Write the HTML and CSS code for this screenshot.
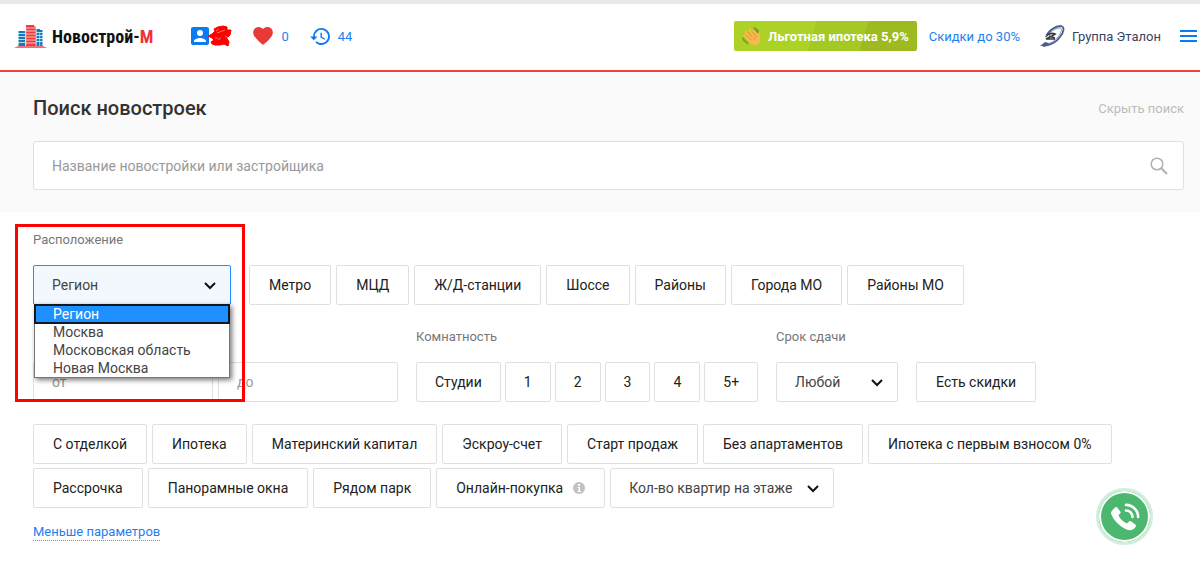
FILE: index.html
```html
<!DOCTYPE html>
<html lang="ru">
<head>
<meta charset="utf-8">
<meta name="viewport" content="width=device-width, initial-scale=1">
<title>Новострой-М</title>
<link rel="stylesheet" href="styles.css">
</head>
<body>
<header class="header">
  <a class="logo" href="#">
    <svg class="logo-mark" viewBox="0 0 33 24" aria-hidden="true">
      <path fill="#f23a3e" d="M12 1h8v21h-8z"/>
      <path fill="#147bb8" d="M4.500 7h7v15h-7zM21 5h7.500v17H21z"/>
      <path fill="#f23a3e" d="M20 2l2 1v19h-2z"/>
      <path stroke="#fff" stroke-width=".7" d="M12 4h10M12 7h10M12 10h10M12 13h10M12 16h10M12 19h10M4 9.500h7M4 12.500h7M4 15.500h7M4 18.500h7M22 8.500h7M22 11.500h7M22 14.500h7M22 17.500h7M11.700 3v19M22.200 3v19"/>
      <path fill="#fff" d="M26 4h3v2h-3zM25.500 9h.6v13h-.6z"/>
      <path fill="#e9747d" d="M0 24l4-2h25l4 2z"/>
    </svg>
    <span class="logo-text">Новострой-<span class="logo-accent">М</span></span>
  </a>
  <nav class="user-nav" aria-label="Профиль">
    <a class="user-link profile" href="#" aria-label="Профиль">
      <svg width="18" height="18" viewBox="3 3 18 18" aria-hidden="true"><path fill="#0b7cf0" d="M3 5v14c0 1.100.900 2 2 2h14c1.100 0 2-.900 2-2V5c0-1.100-.900-2-2-2H5c-1.100 0-2 .900-2 2zm12 4a3 3 0 1 1-6 0 3 3 0 0 1 6 0zm-9 8c0-2 4-3.100 6-3.100s6 1.100 6 3.100v1H6z"/></svg>
      <svg class="scribble" width="25" height="22" viewBox="0 0 25 22" aria-hidden="true"><path fill="#f00" stroke="#f00" stroke-linejoin="round" d="M1 11l4-2 3-3-1-2 4-2 5-1 4 1 0 3 4 0-1 5-2 2-2 0 2 3 1 2-1 4-4-2-4 1-5 0-3-1-1-2 3-2-2-2z"/><path stroke="#ff9c9c" stroke-width=".7" fill="none" d="M9 6l3-2M10 8l8-3M11 15l3-2M8 13l3 0M18 12l2-1"/></svg>
    </a>
    <a class="user-link" href="#" aria-label="Избранное: 0">
      <svg width="20" height="18" viewBox="2 3 20 18.350" aria-hidden="true"><path fill="#e93a37" d="M12 21.350l-1.450-1.320C5.400 15.360 2 12.280 2 8.500 2 5.420 4.420 3 7.500 3c1.740 0 3.410.810 4.500 2.090C13.090 3.810 14.760 3 16.500 3 19.580 3 22 5.420 22 8.500c0 3.780-3.400 6.860-8.550 11.540z"/></svg>
      <span>0</span>
    </a>
    <a class="user-link" href="#" aria-label="История: 44">
      <svg width="20" height="17" viewBox="1 3 21 18" aria-hidden="true"><path fill="#0b7cf0" d="M13 3a9 9 0 0 0-9 9H1l3.890 3.890.070.140L9 12H6a7 7 0 1 1 2.060 4.940l-1.420 1.420A9 9 0 1 0 13 3zm-1 5v5l4.280 2.540.720-1.210-3.500-2.080V8z"/></svg>
      <span>44</span>
    </a>
  </nav>
  <div class="header-side">
    <a class="promo" href="#">
      <svg width="19" height="19" viewBox="0 0 20 20" aria-hidden="true">
        <path fill="none" stroke="#7c9c36" stroke-width="2" stroke-linecap="round" d="M13 1l4 3M14 3l4 4M1 12l2 3M2 14l4 3"/>
        <path fill="none" stroke="#f8b94c" stroke-width="2.800" stroke-linecap="round" d="M4 5l7 8M8 3l6 8M3 9l6 6M12 4l4 6"/>
        <path fill="#f8b94c" d="M7 9l6-4 3 4c0-2 1-4 2.500-3.500 1 .500 0 2 .500 5s0 6-3 8-7 0-9-3z"/>
        <path fill="none" stroke="#d88b31" stroke-width=".8" d="M6 5l5 6M10 4l4 5M5 9l5 5M13 14c0-3 1-4 3-4"/>
      </svg>
      <span>Льготная ипотека 5,9%</span>
    </a>
    <a class="discount" href="#">Скидки до 30%</a>
    <a class="partner" href="#">
      <svg width="25" height="22" viewBox="0 0 25 22" aria-hidden="true">
        <path fill="none" stroke="#4a5f90" stroke-width="1.800" d="M6 12C8 6 15 1 21 1c4 1 3 6-1 11-4 6-10 8-17 9"/>
        <path fill="none" stroke="#8492b4" stroke-width="1" d="M9 9c3-4 8-6 11-6 3 1 1 5-2 9-3 4-7 6-11 7"/>
        <path fill="#4a5f90" d="M0 21l5-4 4 1-2 3z"/>
        <path fill="none" stroke="#3b3c42" stroke-width="1.700" d="M7 10c3-2 6-2 8-1l-3 2-6 3h9M9 11l6 2"/>
      </svg>
      <span>Группа Эталон</span>
    </a>
    <button class="menu-button" type="button" aria-label="Меню">
      <svg width="17" height="12" viewBox="0 0 17 12" aria-hidden="true"><path stroke="#0b7cf0" stroke-width="2" d="M0 1h17M0 6h17M0 11h17"/></svg>
    </button>
  </div>
</header>

<main>
  <section class="search">
    <div class="search-head">
      <h1 class="title">Поиск новостроек</h1>
      <button class="hide-search" type="button">Скрыть поиск</button>
    </div>
    <div class="search-box">
      <input class="search-input" type="search" aria-label="Поиск новостроек" placeholder="Название новостройки или застройщика">
      <button class="search-button" type="button" aria-label="Найти">
        <svg width="18" height="18" viewBox="0 0 18 18" aria-hidden="true"><g fill="none" stroke="#b0b0b0" stroke-width="1.500"><circle cx="7" cy="7" r="5.800"/><path stroke-width="2" d="M11 11l6 6"/></g></svg>
      </button>
    </div>
  </section>

  <form class="filters">
    <div class="row location">
      <div class="group">
        <label class="label" for="region">Расположение</label>
        <div class="select region">
          <select id="region">
            <option>Регион</option>
            <option>Москва</option>
            <option>Московская область</option>
            <option>Новая Москва</option>
          </select>
          <svg class="chevron" width="12" height="8" viewBox="0 0 12 8" aria-hidden="true"><path fill="none" stroke="#111" stroke-width="2" d="M1 1l5 5 5-5"/></svg>
          <ul class="options" role="listbox" aria-label="Расположение">
            <li class="option selected" role="option" aria-selected="true">Регион</li>
            <li class="option" role="option" aria-selected="false">Москва</li>
            <li class="option" role="option" aria-selected="false">Московская область</li>
            <li class="option" role="option" aria-selected="false">Новая Москва</li>
          </ul>
        </div>
      </div>
      <div class="buttons">
        <button class="btn" type="button">Метро</button>
        <button class="btn" type="button">МЦД</button>
        <button class="btn" type="button">Ж/Д-станции</button>
        <button class="btn" type="button">Шоссе</button>
        <button class="btn" type="button">Районы</button>
        <button class="btn" type="button">Города МО</button>
        <button class="btn" type="button">Районы МО</button>
      </div>
      <div class="highlight"></div>
    </div>

    <div class="row parameters">
      <div class="buttons price">
        <input class="field" type="text" aria-label="Цена от" placeholder="от">
        <input class="field" type="text" aria-label="Цена до" placeholder="до">
      </div>
      <div class="group" role="group" aria-labelledby="rooms-label">
        <span class="label" id="rooms-label">Комнатность</span>
        <div class="buttons rooms">
          <button class="btn" type="button">Студии</button>
          <button class="btn" type="button">1</button>
          <button class="btn" type="button">2</button>
          <button class="btn" type="button">3</button>
          <button class="btn" type="button">4</button>
          <button class="btn" type="button">5+</button>
        </div>
      </div>
      <div class="group">
        <label class="label" for="deadline">Срок сдачи</label>
        <div class="select deadline">
          <select id="deadline"><option>Любой</option></select>
          <svg class="chevron" width="12" height="8" viewBox="0 0 12 8" aria-hidden="true"><path fill="none" stroke="#111" stroke-width="2" d="M1 1l5 5 5-5"/></svg>
        </div>
      </div>
      <button class="btn" type="button">Есть скидки</button>
    </div>

    <div class="buttons extra">
      <button class="btn" type="button">С отделкой</button>
      <button class="btn" type="button">Ипотека</button>
      <button class="btn" type="button">Материнский капитал</button>
      <button class="btn" type="button">Эскроу-счет</button>
      <button class="btn" type="button">Старт продаж</button>
      <button class="btn" type="button">Без апартаментов</button>
      <button class="btn" type="button">Ипотека с первым взносом 0%</button>
      <button class="btn" type="button">Рассрочка</button>
      <button class="btn" type="button">Панорамные окна</button>
      <button class="btn" type="button">Рядом парк</button>
      <button class="btn with-info" type="button">Онлайн-покупка
        <svg width="12" height="12" viewBox="0 0 12 12" aria-hidden="true"><circle cx="6" cy="6" r="6" fill="#c1c1c1"/><path fill="#fff" d="M5 2h2v2H5zM4.500 5H7v4h1v1H4.500V9h1V6h-1z"/></svg>
      </button>
      <div class="select flats">
        <select aria-label="Количество квартир на этаже"><option>Кол-во квартир на этаже</option></select>
        <svg class="chevron" width="12" height="8" viewBox="0 0 12 8" aria-hidden="true"><path fill="none" stroke="#111" stroke-width="2" d="M1 1l5 5 5-5"/></svg>
      </div>
    </div>
    <a class="less" href="#">Меньше параметров</a>
  </form>
</main>

<button class="call" type="button" aria-label="Позвонить">
  <svg width="30" height="30" viewBox="0 0 32 32" aria-hidden="true">
    <path fill="#fff" d="M5 6c1-1 2-1 3 0l3 4c1 1 0 2-1 3l-1 1c2 4 5 7 9 9l2-2c1-1 2-1 3 0l4 3c1 1 1 2 0 3-3 4-7 4-12 1C8 24 3 18 1 12c0-2 2-4 4-6z"/>
    <path fill="none" stroke="#fff" stroke-width="2.800" stroke-linecap="round" d="M17 9c4 0 7 3 7 7M17 3c7 0 13 6 13 13"/>
  </svg>
</button>
</body>
</html>
```

FILE: styles.css
```css
* {
  box-sizing: border-box;
}

body {
  margin: 0;
  background: #fff;
  color: #212121;
  font-family: Roboto, "Liberation Sans", sans-serif;
  font-size: 14px;
}

a {
  color: #1f7fee;
  text-decoration: none;
}

button,
input,
select {
  font: inherit;
  color: inherit;
}

button {
  padding: 0;
  border: 0;
  background: none;
}

svg {
  flex-shrink: 0;
}

.header {
  display: flex;
  align-items: center;
  height: 72px;
  padding: 0 3px 2px 14px;
  border-top: 4px solid #e9e9e9;
  border-bottom: 2px solid #ef4140;
  font-size: 13px;
}

.logo {
  display: flex;
  align-items: center;
  gap: 5px;
  color: #111;
}

.logo-mark {
  width: 33px;
  height: 24px;
}

.logo-text {
  font: bold 18px "Roboto Condensed", "Liberation Sans Narrow", Roboto, sans-serif;
}

.logo-accent {
  color: #ee3338;
}

.user-nav {
  display: flex;
  align-items: center;
  gap: 21px;
  margin-left: 38px;
}

.user-link {
  display: flex;
  align-items: center;
  gap: 8px;
}

.profile {
  gap: 0;
}

.scribble {
  margin-left: -2px;
}

.header-side {
  display: flex;
  align-items: center;
  margin-left: auto;
}

.promo {
  display: flex;
  align-items: center;
  gap: 7px;
  height: 30px;
  padding: 0 8px;
  border-radius: 2px;
  background: linear-gradient(107deg, #add226 43%, #a4c925 43% 70%, #9dbb20 70%);
  color: #fff;
  font-weight: bold;
}

.discount {
  margin-left: 12px;
}

.partner {
  display: flex;
  align-items: center;
  gap: 7px;
  margin-left: 20px;
  color: #39435f;
}

.menu-button {
  display: flex;
  margin-left: 19px;
}

.search {
  padding: 24px 16px 22px 33px;
  background: #fafafa;
}

.search-head {
  display: flex;
  align-items: center;
  justify-content: space-between;
  margin-bottom: 21px;
}

.title {
  margin: 0;
  color: #333;
  font-size: 20px;
  font-weight: 500;
  line-height: 24px;
}

.hide-search {
  color: #bcbcbc;
  font-size: 13px;
}

.search-box {
  display: flex;
  align-items: center;
  height: 49px;
  padding: 0 15px 0 18px;
  border: 1px solid #e0e0e0;
  border-radius: 3px;
  background: #fff;
}

.search-input {
  flex: 1;
  min-width: 0;
  padding: 0;
  border: 0;
  outline: 0;
  background: none;
}

.search-input::placeholder,
.field::placeholder {
  color: #999;
  opacity: 1;
}

.search-button {
  display: flex;
}

.filters {
  padding: 20px 33px;
}

.row {
  display: flex;
  flex-wrap: wrap;
  align-items: flex-end;
  gap: 18px;
}

.location {
  position: relative;
}

.parameters {
  margin-top: 24px;
}

.group {
  display: flex;
  flex-direction: column;
  gap: 17px;
}

.label {
  color: #777;
  font-size: 13px;
  line-height: 16px;
}

.buttons {
  display: flex;
  flex-wrap: wrap;
  gap: 5px;
}

.btn,
.field,
.select select {
  height: 40px;
  padding: 0 18px;
  border: 1px solid #e0e0e0;
  border-radius: 2px;
  background: #fff;
}

.btn {
  padding: 0 19px;
}

.rooms {
  gap: 4px;
}

.rooms .btn {
  padding: 0 18px;
}

.with-info {
  display: flex;
  align-items: center;
  gap: 10px;
}

.select {
  position: relative;
}

.select select {
  width: 100%;
  appearance: none;
  color: #444;
}

.chevron {
  position: absolute;
  top: 17px;
  right: 15px;
  pointer-events: none;
}

.region {
  width: 198px;
}

.region select {
  border-color: #1f8fff;
  background: #f3f8ff;
}

.options {
  position: absolute;
  z-index: 1;
  top: 39px;
  left: 1px;
  right: 1px;
  margin: 0;
  padding: 0;
  border: 1px solid #777;
  background: #fff;
  box-shadow: 2px 2px 5px #0008;
  color: #444;
  list-style: none;
}

.option {
  padding: 0 18px;
  line-height: 18px;
}

.selected {
  outline: 2px solid #101820;
  outline-offset: -1px;
  background: #1e90ff;
  color: #fff;
}

.highlight {
  position: absolute;
  z-index: 2;
  top: -8px;
  left: -18px;
  width: 230px;
  height: 178px;
  border: 3px solid #f00;
  pointer-events: none;
}

.field {
  width: 180px;
}

.deadline {
  width: 122px;
}

.flats {
  width: 224px;
}

.extra {
  row-gap: 4px;
  margin-top: 22px;
}

.less {
  display: inline-block;
  margin-top: 16px;
  border-bottom: 1px dotted #ed6565;
  font-size: 13px;
  line-height: 16px;
}

.call {
  position: fixed;
  right: 47px;
  bottom: 16px;
  display: grid;
  place-items: center;
  width: 57px;
  height: 57px;
  border: 3px solid #d0eedb;
  border-radius: 50%;
  background: #4cb86f;
  box-shadow: inset 0 0 0 2px #fff;
}
```
